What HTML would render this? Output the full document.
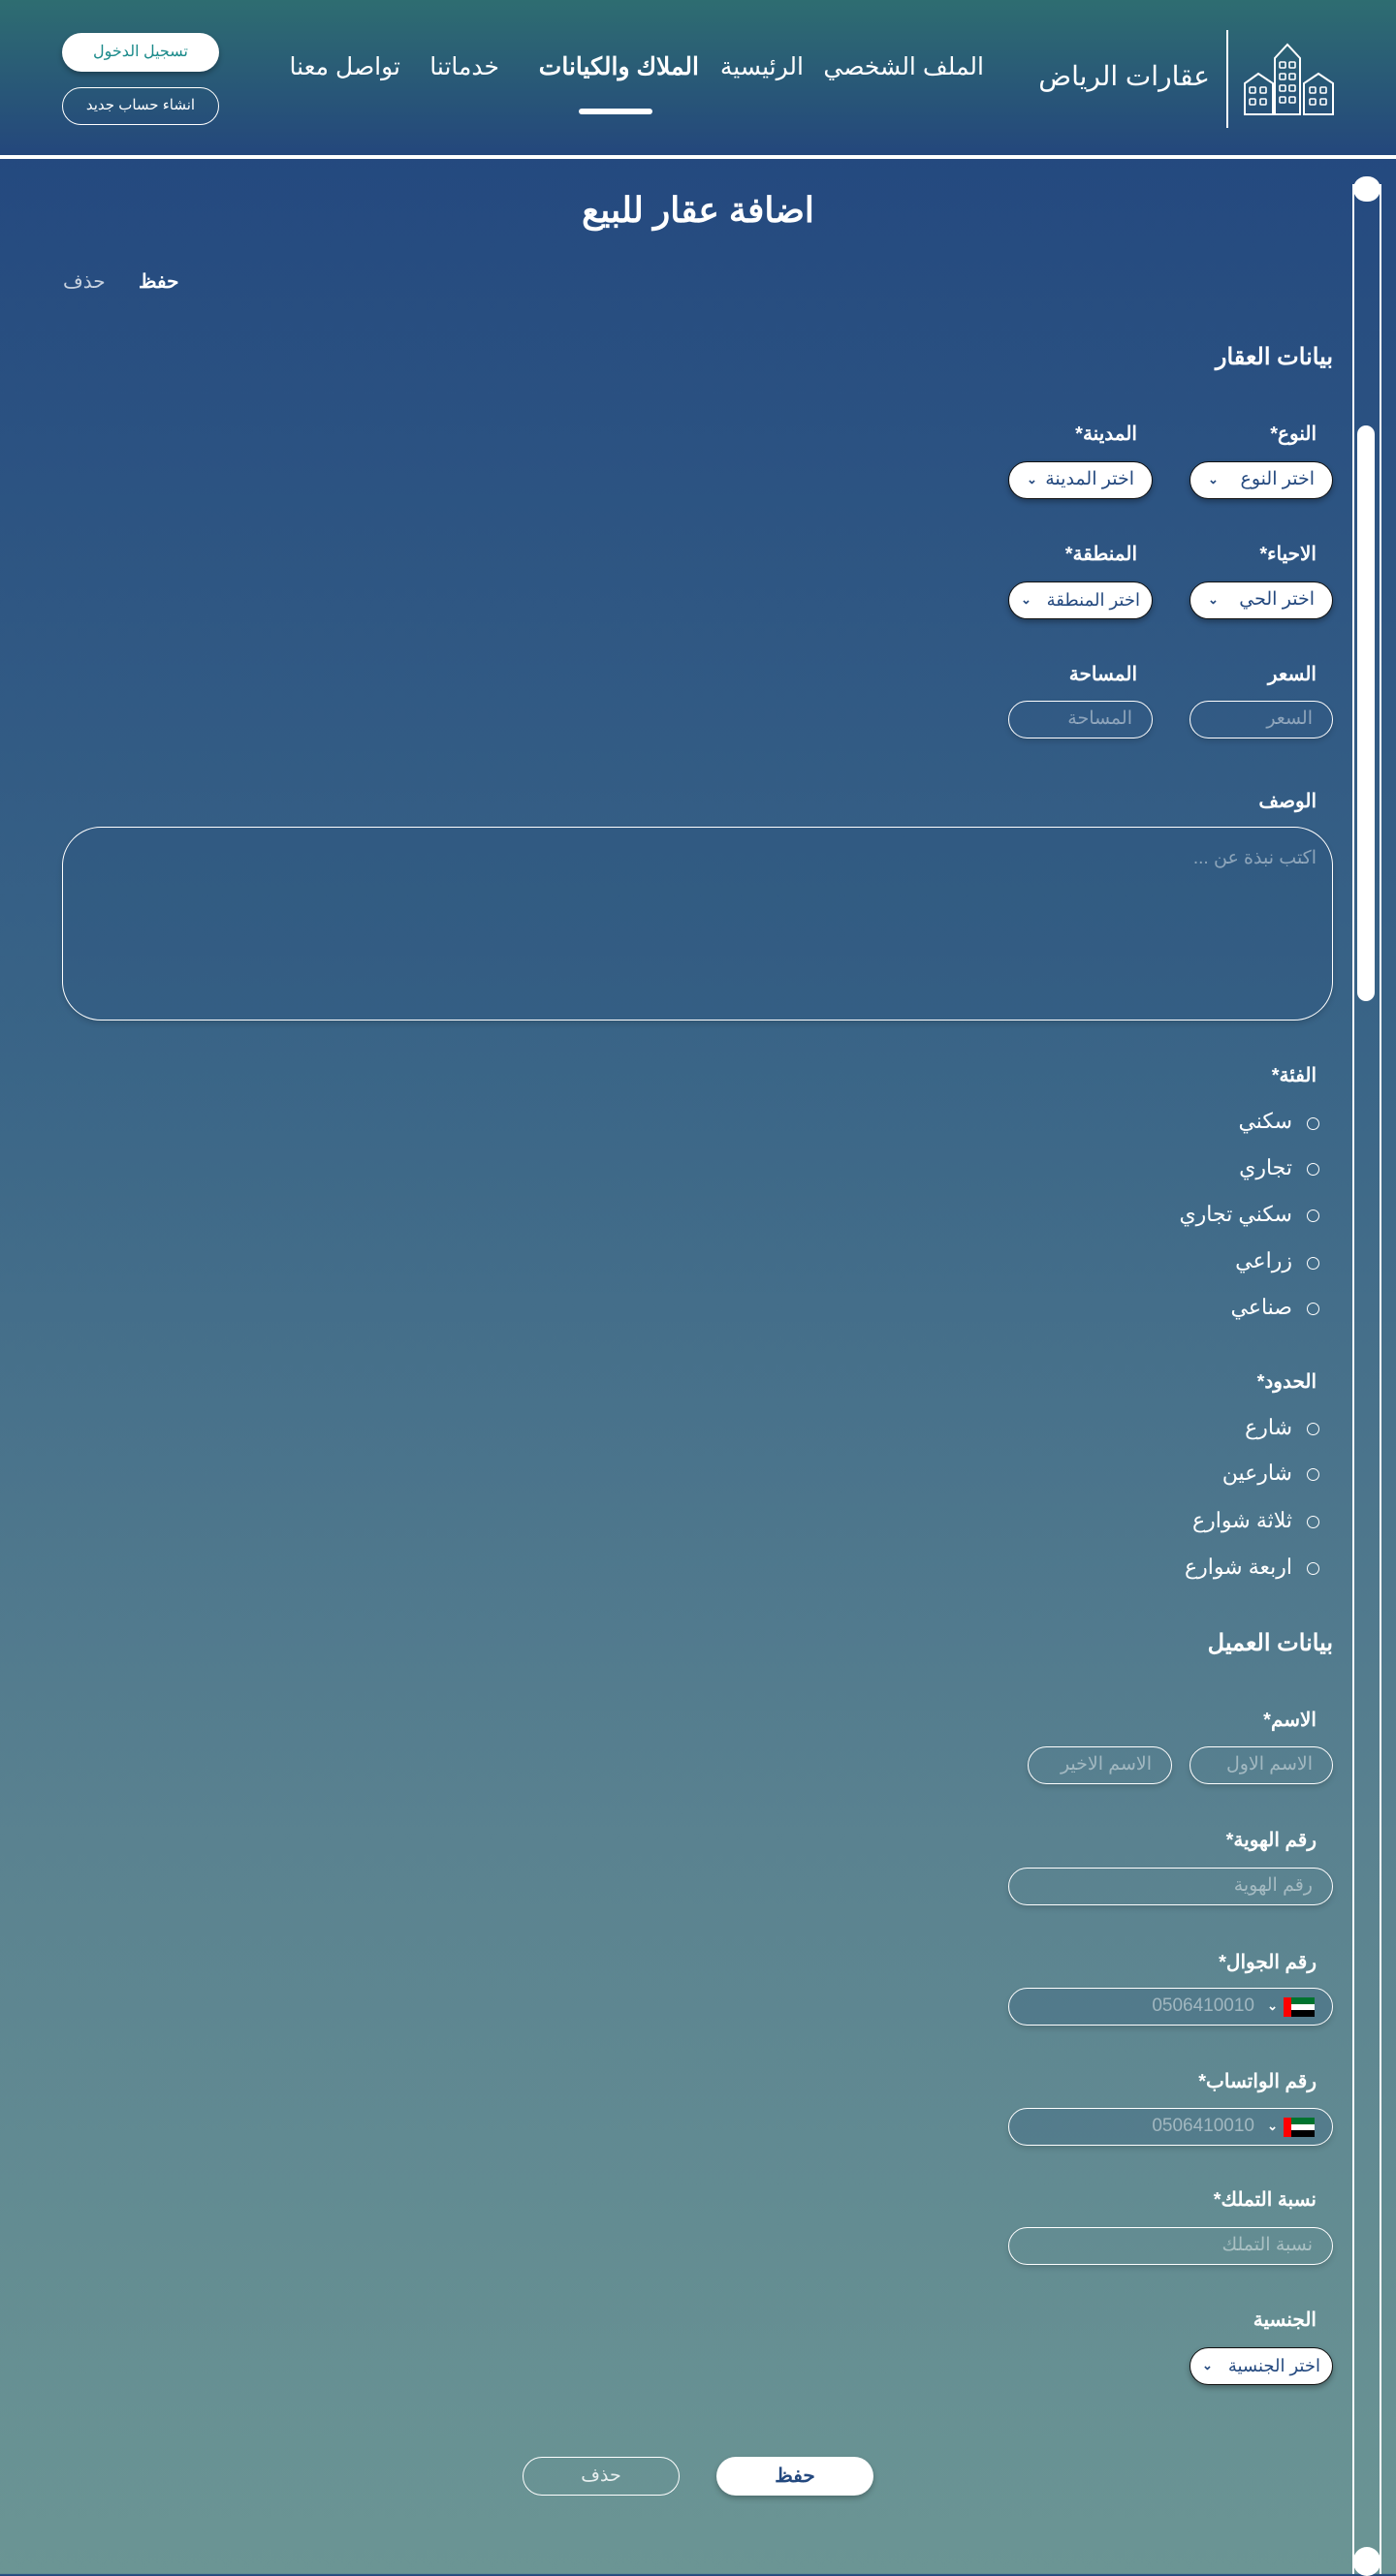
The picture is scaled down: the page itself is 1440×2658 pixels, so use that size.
<!DOCTYPE html>
<html><head><meta charset="utf-8">
<style>
*{margin:0;padding:0;box-sizing:border-box}
body{width:1440px;height:2656px;position:relative;overflow:hidden;font-family:"Liberation Sans","Noto Sans CJK SC",sans-serif;background:linear-gradient(180deg,#24497f 160px,#3a6587 1100px,#5a8290 1900px,#6b9594 2656px);color:#fff}
.a{position:absolute}
header{position:absolute;left:0;top:0;width:1440px;height:160px;background:linear-gradient(180deg,#2e6d71,#24477c)}
.line{top:160px;left:0;width:1440px;height:4px;background:#fff}
.nav{top:54px;font-size:25px;white-space:nowrap;direction:rtl}
.lbl{font-size:20px;font-weight:bold;direction:rtl;text-align:right;white-space:nowrap}
.sel{background:#fff;border:1.5px solid #111;border-radius:20px;height:39px;color:#24497f;font-size:19px;direction:rtl;padding-right:18px;line-height:36px;box-shadow:0 3px 6px rgba(0,0,0,.3)}
.sel i{position:absolute;left:18px;top:0;font-style:normal;font-size:13px;font-weight:bold}
.inp{border:1.5px solid #fff;border-radius:20px;height:39px;color:rgba(255,255,255,.45);font-size:19px;direction:rtl;padding-right:20px;line-height:36px;box-shadow:0 3px 6px rgba(0,0,0,.15)}
.rad{font-size:22px;direction:rtl;right:107px;white-space:nowrap}
.rc{width:13px;height:13px;border:1.5px solid #fff;border-radius:50%;left:1348px}
.flag{width:32px;height:20px;right:18px;top:9px}
</style></head><body>
<header>
<svg class="a" style="left:1280px;top:44px" width="100" height="78" viewBox="0 0 100 78" fill="none" stroke="#fff" stroke-width="2">
<path d="M35 74V16L48 2L61 16V74Z"/><path d="M4 74V42L18 32L33 42V74Z"/><path d="M65 74V42L80 32L95 42V74Z"/>
<g stroke-width="1.6"><rect x="40" y="20" width="6" height="6" rx="1"/><rect x="50" y="20" width="6" height="6" rx="1"/><rect x="40" y="32" width="6" height="6" rx="1"/><rect x="50" y="32" width="6" height="6" rx="1"/><rect x="40" y="44" width="6" height="6" rx="1"/><rect x="50" y="44" width="6" height="6" rx="1"/><rect x="40" y="56" width="6" height="6" rx="1"/><rect x="50" y="56" width="6" height="6" rx="1"/>
<rect x="9" y="46" width="6" height="6" rx="1"/><rect x="20" y="46" width="6" height="6" rx="1"/><rect x="9" y="58" width="6" height="6" rx="1"/><rect x="20" y="58" width="6" height="6" rx="1"/>
<rect x="71" y="46" width="6" height="6" rx="1"/><rect x="82" y="46" width="6" height="6" rx="1"/><rect x="71" y="58" width="6" height="6" rx="1"/><rect x="82" y="58" width="6" height="6" rx="1"/></g></svg>
<div class="a" style="left:1265px;top:31px;width:2px;height:101px;background:#fff"></div>
<div class="a" style="right:192px;top:62px;font-size:28px;direction:rtl">عقارات الرياض</div>
<div class="a nav" style="right:425px">الملف الشخصي</div>
<div class="a nav" style="right:611px">الرئيسية</div>
<div class="a nav" style="right:719px;font-weight:bold">الملاك والكيانات</div>
<div class="a nav" style="right:925px">خدماتنا</div>
<div class="a nav" style="right:1027px">تواصل معنا</div>
<div class="a" style="left:597px;top:112px;width:76px;height:6px;border-radius:3px;background:#fff"></div>
<div class="a" style="left:64px;top:34px;width:162px;height:40px;border-radius:20px;background:#fff;color:#1a8a8a;font-size:16px;text-align:center;line-height:40px;box-shadow:0 3px 6px rgba(0,0,0,.3)">تسجيل الدخول</div>
<div class="a" style="left:64px;top:90px;width:162px;height:39px;border-radius:20px;border:1.5px solid #fff;font-size:15px;text-align:center;line-height:36px">انشاء حساب جديد</div>
</header>
<div class="a line"></div>
<div class="a" style="left:1395px;top:190px;width:2px;height:2466px;background:#fff"></div>
<div class="a" style="left:1423px;top:190px;width:2px;height:2466px;background:#fff"></div>
<div class="a" style="left:1396px;top:182px;width:28px;height:26px;border-radius:14px;background:#fff"></div>
<div class="a" style="left:1396px;top:2628px;width:28px;height:30px;border-radius:14px;background:#fff"></div>
<div class="a" style="left:1400px;top:439px;width:18px;height:594px;border-radius:9px;background:#fff"></div>

<div class="a" style="left:0;width:1440px;top:196px;text-align:center;font-size:36px;font-weight:bold;direction:rtl">اضافة عقار للبيع</div>
<div class="a" style="left:143px;top:278px;font-size:20px;font-weight:bold">حفظ</div>
<div class="a" style="left:65px;top:278px;font-size:20px;color:rgba(255,255,255,.75)">حذف</div>

<div class="a lbl" style="right:65px;top:354px;font-size:24px">بيانات العقار</div>
<div class="a lbl" style="right:82px;top:435px">النوع*</div>
<div class="a lbl" style="right:267px;top:435px">المدينة*</div>
<div class="a sel" style="left:1227px;top:476px;width:148px">اختر النوع<i>⌄</i></div>
<div class="a sel" style="left:1040px;top:476px;width:149px">اختر المدينة<i>⌄</i></div>
<div class="a lbl" style="right:82px;top:559px">الاحياء*</div>
<div class="a lbl" style="right:267px;top:559px">المنطقة*</div>
<div class="a sel" style="left:1227px;top:600px;width:148px">اختر الحي<i>⌄</i></div>
<div class="a sel" style="left:1040px;top:600px;width:149px;font-size:18px;padding-right:12px">اختر المنطقة<i style="left:12px">⌄</i></div>
<div class="a lbl" style="right:82px;top:683px">السعر</div>
<div class="a lbl" style="right:267px;top:683px">المساحة</div>
<div class="a inp" style="left:1227px;top:723px;width:148px">السعر</div>
<div class="a inp" style="left:1040px;top:723px;width:149px">المساحة</div>

<div class="a lbl" style="right:82px;top:814px">الوصف</div>
<div class="a" style="left:64px;top:853px;width:1311px;height:200px;border:1.5px solid #fff;border-radius:40px;background:rgba(40,80,125,.25);box-shadow:0 3px 6px rgba(0,0,0,.15)"></div>
<div class="a" style="right:82px;top:874px;font-size:19px;color:rgba(255,255,255,.45);direction:rtl">اكتب نبذة عن ...</div>

<div class="a lbl" style="right:82px;top:1097px">الفئة*</div>
<div class="a rad" style="top:1144px">سكني</div><div class="a rc" style="top:1153px"></div>
<div class="a rad" style="top:1192px">تجاري</div><div class="a rc" style="top:1200px"></div>
<div class="a rad" style="top:1240px">سكني تجاري</div><div class="a rc" style="top:1248px"></div>
<div class="a rad" style="top:1288px">زراعي</div><div class="a rc" style="top:1297px"></div>
<div class="a rad" style="top:1336px">صناعي</div><div class="a rc" style="top:1344px"></div>

<div class="a lbl" style="right:82px;top:1413px">الحدود*</div>
<div class="a rad" style="top:1460px">شارع</div><div class="a rc" style="top:1468px"></div>
<div class="a rad" style="top:1507px">شارعين</div><div class="a rc" style="top:1515px"></div>
<div class="a rad" style="top:1556px">ثلاثة شوارع</div><div class="a rc" style="top:1564px"></div>
<div class="a rad" style="top:1604px">اربعة شوارع</div><div class="a rc" style="top:1612px"></div>

<div class="a lbl" style="right:65px;top:1681px;font-size:24px">بيانات العميل</div>
<div class="a lbl" style="right:82px;top:1762px">الاسم*</div>
<div class="a inp" style="left:1227px;top:1802px;width:148px">الاسم الاول</div>
<div class="a inp" style="left:1060px;top:1802px;width:149px">الاسم الاخير</div>
<div class="a lbl" style="right:82px;top:1886px">رقم الهوية*</div>
<div class="a inp" style="left:1040px;top:1927px;width:335px">رقم الهوية</div>
<div class="a lbl" style="right:82px;top:2012px">رقم الجوال*</div>
<div class="a inp" style="left:1040px;top:2051px;width:335px;background:rgba(60,100,130,.35);padding-right:80px;direction:ltr;text-align:right">0506410010
<svg class="a flag" viewBox="0 0 32 20"><rect width="32" height="7" fill="#00732f"/><rect y="7" width="32" height="6" fill="#fff"/><rect y="13" width="32" height="7" fill="#000"/><rect width="8" height="20" fill="#f00"/></svg>
<span class="a" style="right:56px;top:0;color:#fff;font-size:13px;font-weight:bold">⌄</span></div>
<div class="a lbl" style="right:82px;top:2135px">رقم الواتساب*</div>
<div class="a inp" style="left:1040px;top:2175px;width:335px;background:rgba(60,100,130,.35);padding-right:80px;direction:ltr;text-align:right">0506410010
<svg class="a flag" viewBox="0 0 32 20"><rect width="32" height="7" fill="#00732f"/><rect y="7" width="32" height="6" fill="#fff"/><rect y="13" width="32" height="7" fill="#000"/><rect width="8" height="20" fill="#f00"/></svg>
<span class="a" style="right:56px;top:0;color:#fff;font-size:13px;font-weight:bold">⌄</span></div>
<div class="a lbl" style="right:82px;top:2257px">نسبة التملك*</div>
<div class="a inp" style="left:1040px;top:2298px;width:335px">نسبة التملك</div>
<div class="a lbl" style="right:82px;top:2381px">الجنسية</div>
<div class="a sel" style="left:1227px;top:2422px;width:148px;font-size:18px;padding-right:12px">اختر الجنسية<i style="left:12px">⌄</i></div>

<div class="a" style="left:739px;top:2535px;width:162px;height:40px;border-radius:20px;background:#fff;color:#24497f;font-weight:bold;font-size:20px;text-align:center;line-height:40px;box-shadow:0 3px 6px rgba(0,0,0,.25)">حفظ</div>
<div class="a" style="left:539px;top:2535px;width:162px;height:40px;border-radius:20px;border:1.5px solid #fff;font-size:19px;text-align:center;line-height:37px;color:rgba(255,255,255,.85)">حذف</div>
</body></html>
